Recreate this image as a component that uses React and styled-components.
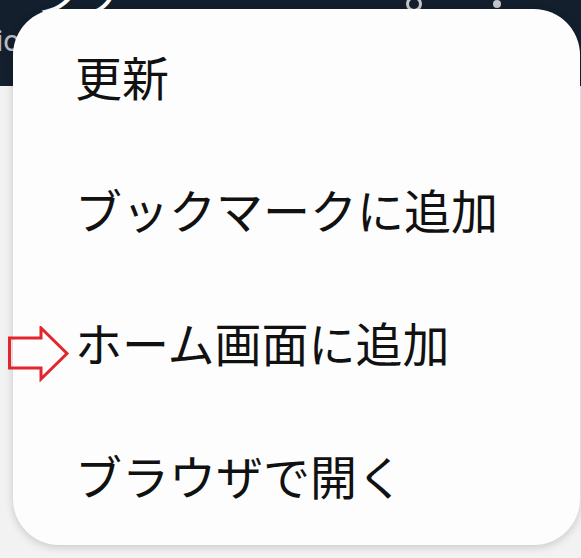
import React from "react";
import styled, { createGlobalStyle } from "styled-components";

const GlobalStyle = createGlobalStyle`
  html, body {
    margin: 0;
    padding: 0;
    background: #f2f2f2;
  }
  body {
    font-family: "Noto Sans CJK JP", "Noto Sans", sans-serif;
  }
`;

const Page = styled.div`
  position: relative;
  width: 581px;
  height: 558px;
  overflow: hidden;
  background: #f2f2f2;
`;

const Header = styled.header`
  display: flex;
  justify-content: space-between;
  align-items: flex-start;
  height: 86px;
  padding: 0 80px 0 0;
  box-sizing: border-box;
  background: #131f2d;
  overflow: hidden;
`;

const TitleBlock = styled.div`
  display: flex;
  flex-direction: column;
  margin: -36px 0 0 -6px;
`;

const Title = styled.div`
  font-size: 44px;
  line-height: 60px;
  color: #ffffff;
  white-space: nowrap;
`;

const SubTitle = styled.div`
  font-family: "Roboto", "Noto Sans", sans-serif;
  font-size: 30px;
  line-height: 34px;
  margin-left: 2px;
  color: #b9bec4;
`;

const Actions = styled.div`
  display: flex;
  align-items: center;
  gap: 71px;
  margin-top: -4px;
`;

const HeadIcon = styled.div`
  width: ${(p) => p.$size}px;
  height: ${(p) => p.$size}px;
  border-radius: 50%;
  box-sizing: border-box;
  border: ${(p) => (p.$ring ? "3px solid #c3c7cc" : "none")};
  background: ${(p) => (p.$ring ? "transparent" : "#c3c7cc")};
`;

const Menu = styled.ul`
  position: absolute;
  left: 13px;
  top: 9px;
  width: 567px;
  margin: 0;
  padding: 0 0 4px;
  list-style: none;
  background: #fdfdfd;
  border-radius: 46px;
  box-shadow: 0 2px 8px rgba(0, 0, 0, 0.18);
`;

const Item = styled.li`
  display: flex;
  align-items: center;
  height: 133px;
  padding-left: 62px;
  font-size: 47px;
  color: #111111;
`;

const Pointer = styled.svg`
  position: absolute;
  left: 8px;
  top: 326px;
`;

const items = ["更新", "ブックマークに追加", "ホーム画面に追加", "ブラウザで開く"];

export default function App() {
  return (
    <Page>
      <GlobalStyle />
      <Header>
        <TitleBlock>
          <Title>ーンク</Title>
          <SubTitle>io</SubTitle>
        </TitleBlock>
        <Actions>
          <HeadIcon $size={16} $ring />
          <HeadIcon $size={8} />
        </Actions>
      </Header>
      <Menu>
        {items.map((label) => (
          <Item key={label}>{label}</Item>
        ))}
      </Menu>
      <Pointer width="62" height="56" viewBox="0 0 62 56">
        <path
          d="M1.5 12 H33 V2 L59 27.5 L33 53 V42 H1.5 Z"
          fill="none"
          stroke="#e3262d"
          strokeWidth="3"
          strokeLinejoin="miter"
        />
      </Pointer>
    </Page>
  );
}
